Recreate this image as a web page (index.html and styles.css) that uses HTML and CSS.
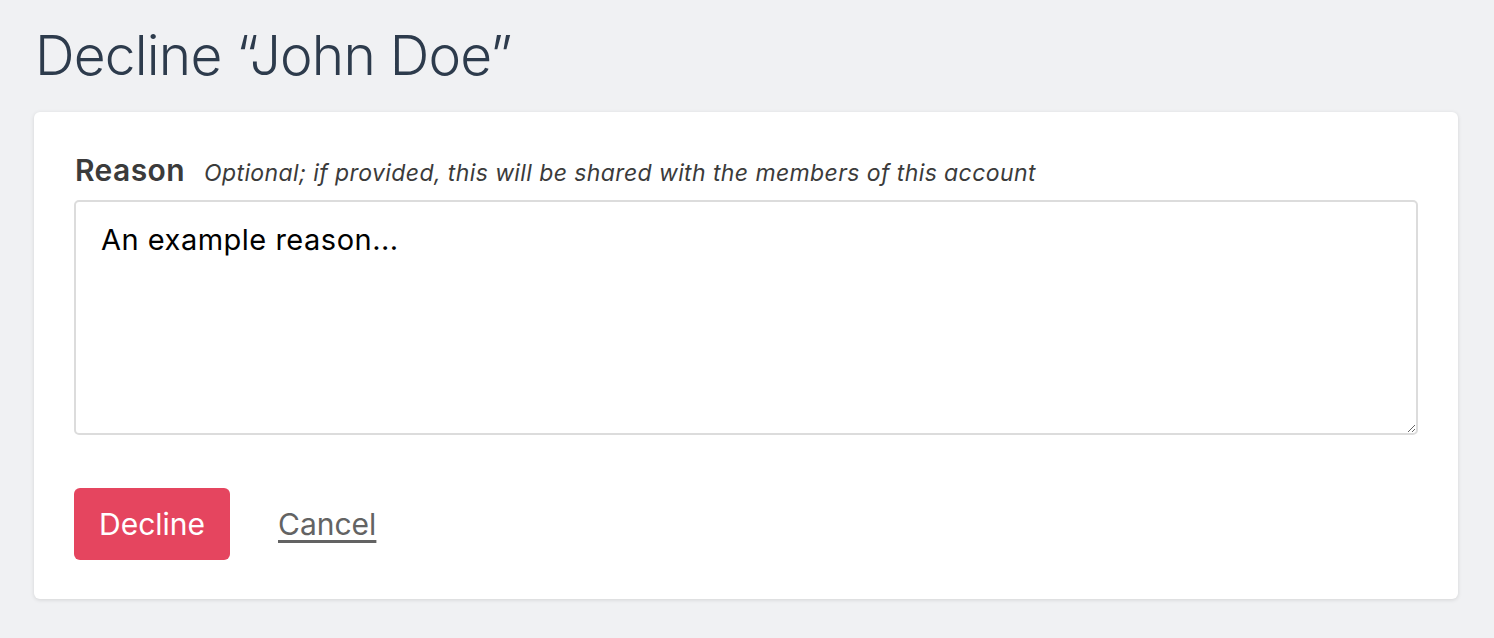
FILE: index.html
```html
<!DOCTYPE html>
<html lang="en">
<head>
  <meta charset="UTF-8">
  <meta name="viewport" content="width=device-width, initial-scale=1.0">
  <title>Decline</title>
  <link rel="stylesheet" href="styles.css">
</head>
<body>
  <div class="page">
    <h1 class="title">Decline “John Doe”</h1>
    <form class="card">
      <div class="field-label">
        <label for="reason">Reason</label>
        <span class="hint">Optional; if provided, this will be shared with the members of this account</span>
      </div>
      <textarea id="reason" class="reason">An example reason...</textarea>
      <div class="actions">
        <button type="button" class="btn-decline">Decline</button>
        <a href="#" class="cancel">Cancel</a>
      </div>
    </form>
  </div>
</body>
</html>
```

FILE: styles.css
```css
body {
  margin: 0;
  background: #f0f1f3;
  font-family: Inter, "Noto Sans", sans-serif;
}
.page {
  padding: 18px 36px 38px 34px;
}
.title {
  margin: 0 0 20px 1px;
  font-size: 55px;
  font-weight: 300;
  line-height: 74px;
  color: #2d3b4c;
  letter-spacing: -0.8px;
}
.card {
  background: #fff;
  border-radius: 6px;
  box-shadow: 0 1px 4px rgba(0, 0, 0, 0.12);
  padding: 40px 40px 39px 40px;
}
.field-label {
  display: flex;
  align-items: baseline;
  gap: 19px;
  padding-left: 1px;
  margin-bottom: 12px;
}
.field-label label {
  font-size: 30px;
  font-weight: 600;
  color: #3b3b3b;
  letter-spacing: 0.4px;
}
.hint {
  font-size: 23px;
  font-style: italic;
  color: #3b3b3b;
  letter-spacing: 0.4px;
}
.reason {
  display: block;
  box-sizing: border-box;
  width: 100%;
  height: 235px;
  border: 2px solid #dcdcdc;
  border-radius: 5px;
  padding: 20px 25px;
  font-family: inherit;
  font-size: 29px;
  letter-spacing: 0.5px;
  color: #000;
  resize: vertical;
  margin: 0;
}
.actions {
  display: flex;
  align-items: center;
  gap: 48px;
  margin-top: 53px;
}
.btn-decline {
  background: #e5455f;
  color: #fff;
  border: none;
  border-radius: 6px;
  width: 156px;
  height: 72px;
  font-family: inherit;
  font-size: 30px;
  cursor: pointer;
}
.cancel {
  color: #636363;
  font-size: 30px;
  text-underline-offset: 5px;
}
```
